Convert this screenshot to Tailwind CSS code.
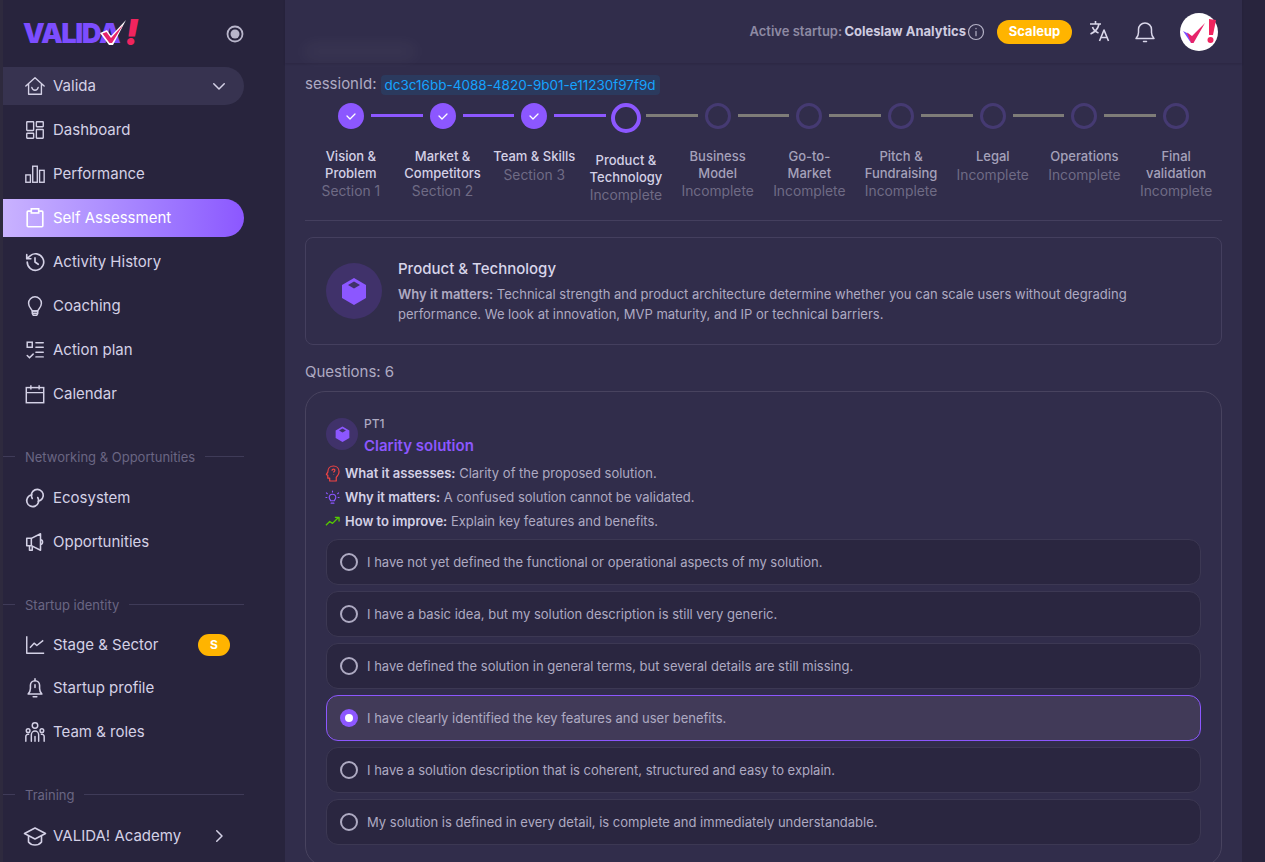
<!DOCTYPE html>
<html lang="en">
<head>
  <meta charset="UTF-8" />
  <title>VALIDA! - Self Assessment</title>
  <script src="https://cdn.jsdelivr.net/npm/@tailwindcss/browser@4"></script>
</head>
<body class="bg-[#28243d] font-['Inter',sans-serif] text-[#d4d1e6]">
<div class="flex h-screen overflow-hidden">

  <!-- Sidebar -->
  <aside class="w-[285px] shrink-0 bg-[#28243d] text-[15px] border-l-[3px] border-[#2e2a3e] box-border">
    <div class="h-[67px] flex items-center pl-5 pr-[41px] justify-between">
      <div class="relative w-[116px] h-[30px] -mt-[1px]">
        <span class="text-[27.500px] leading-[30px] font-black tracking-[-1.500px] text-[#7c4dff]">VALIDA</span>
        <span class="absolute left-[102px] -top-[6px] text-[36px] leading-[40px] font-black italic text-[#f0245e]">!</span>
        <svg class="absolute left-[76px] top-[1px]" width="28" height="27" viewBox="0 0 28 27" fill="none">
          <path d="M1 14 L8 11 L12 17 L27 1 L14 26 L10 26Z" fill="#fff"/>
          <path d="M3.500 14.500 L7.500 13 L12 19 L24 6 L13 24 L10.500 24Z" fill="#e6246a"/>
        </svg>
      </div>
      <svg width="18" height="18" viewBox="0 0 18 18" fill="none"><circle cx="9" cy="9" r="7.500" stroke="#b9b6cb" stroke-width="1.800"/><circle cx="9" cy="9" r="4.500" fill="#b9b6cb"/></svg>
    </div>

    <nav class="w-[241px]">
      <a class="flex items-center h-[38px] pl-[21px] pr-4 gap-[7px] rounded-r-full bg-[#373350]">
        <svg class="w-[22px] h-[22px] shrink-0" viewBox="0 0 24 24" fill="none" stroke="#d4d1e6" stroke-width="1.500" stroke-linejoin="round" stroke-linecap="round"><path d="M2 12 12 3l10 9M5 10v11h14V10"/><path d="M8.500 13.500c.6 2.300 2 3.200 3.500 3.200s2.900-.9 3.500-3.200"/></svg>
        <span class="flex-1">Valida</span>
        <svg class="w-[18px] h-[18px]" viewBox="0 0 24 24" fill="none" stroke="#d4d1e6" stroke-width="2" stroke-linecap="round" stroke-linejoin="round"><path d="m5 9 7 7 7-7"/></svg>
      </a>

      <a class="flex items-center h-[38px] mt-[6px] pl-[21px] gap-[7px]">
        <svg class="w-[22px] h-[22px] shrink-0" viewBox="0 0 24 24" fill="none" stroke="#d4d1e6" stroke-width="1.500"><rect x="3" y="3" width="7.500" height="9.500" rx=".5"/><rect x="13.500" y="3" width="7.500" height="5.500" rx=".5"/><rect x="3" y="15.500" width="7.500" height="5.500" rx=".5"/><rect x="13.500" y="11.500" width="7.500" height="9.500" rx=".5"/></svg>
        <span>Dashboard</span>
      </a>
      <a class="flex items-center h-[38px] mt-[6px] pl-[21px] gap-[7px]">
        <svg class="w-[22px] h-[22px] shrink-0" viewBox="0 0 24 24" fill="none" stroke="#d4d1e6" stroke-width="1.500"><rect x="2" y="13" width="5" height="8"/><rect x="9.500" y="3.500" width="5" height="17.500"/><rect x="17" y="8" width="5" height="13"/></svg>
        <span>Performance</span>
      </a>
      <a class="flex items-center h-[38px] mt-[6px] pl-[21px] gap-[7px] rounded-r-full bg-gradient-to-r from-[#c9b2ff] to-[#8c57ff] text-white">
        <svg class="w-[22px] h-[22px] shrink-0" viewBox="0 0 24 24" fill="none" stroke="#fff" stroke-width="1.800"><rect x="3.500" y="4.500" width="17" height="17" rx="1"/><rect x="8" y="2" width="8" height="4.500" fill="#b195ff"/></svg>
        <span>Self Assessment</span>
      </a>
      <a class="flex items-center h-[38px] mt-[6px] pl-[21px] gap-[7px]">
        <svg class="w-[22px] h-[22px] shrink-0" viewBox="0 0 24 24" fill="none" stroke="#d4d1e6" stroke-width="1.800" stroke-linecap="round" stroke-linejoin="round"><path d="M3.500 12a9 9 0 1 0 2.800-6.500L3 8.500M3 4v4.500h4.500M12 7.500V12l3.500 2.500"/></svg>
        <span>Activity History</span>
      </a>
      <a class="flex items-center h-[38px] mt-[6px] pl-[21px] gap-[7px]">
        <svg class="w-[22px] h-[22px] shrink-0" viewBox="0 0 24 24" fill="none" stroke="#d4d1e6" stroke-width="1.600" stroke-linejoin="round"><path d="M9 17.500c0-2-4-3.500-4-8.500a7 7 0 0 1 14 0c0 5-4 6.500-4 8.500Z"/><path d="M9 17.500h6v2.500l-1 2h-4l-1-2ZM9 20h6"/></svg>
        <span>Coaching</span>
      </a>
      <a class="flex items-center h-[38px] mt-[6px] pl-[21px] gap-[7px]">
        <svg class="w-[22px] h-[22px] shrink-0" viewBox="0 0 24 24" fill="none" stroke="#d4d1e6" stroke-width="1.600"><rect x="3.500" y="3.500" width="5.500" height="5.500"/><path d="M13 4h8M13 9h8M13 19.500h8M13 14.500h8M3.500 18l2.500 2.500 4-4" stroke-linecap="round"/></svg>
        <span>Action plan</span>
      </a>
      <a class="flex items-center h-[38px] mt-[6px] pl-[21px] gap-[7px]">
        <svg class="w-[22px] h-[22px] shrink-0" viewBox="0 0 24 24" fill="none" stroke="#d4d1e6" stroke-width="1.600"><rect x="2.500" y="5" width="19" height="16.500"/><path d="M2.500 10.500h19M7.500 2.500V7M16.500 2.500V7"/></svg>
        <span>Calendar</span>
      </a>

      <div class="flex items-center h-4 mt-[37px] text-[13px] text-[#6a6683] gap-[10px]">
        <span class="w-3 h-px -mt-[4px] bg-[#3f3b58]"></span>
        <span>Networking &amp; Opportunities</span>
        <span class="flex-1 h-px -mt-[4px] bg-[#3f3b58]"></span>
      </div>

      <a class="flex items-center h-[38px] mt-[13px] pl-[21px] gap-[7px]">
        <svg class="w-[22px] h-[22px] shrink-0" viewBox="0 0 24 24" fill="none" stroke="#d4d1e6" stroke-width="1.800" stroke-linecap="round"><path d="M9 12.500A6.500 6.500 0 1 1 15.500 15.500"/><path d="M15 11.500A6.500 6.500 0 1 1 8.500 8.500"/></svg>
        <span>Ecosystem</span>
      </a>
      <a class="flex items-center h-[38px] mt-[6px] pl-[21px] gap-[7px]">
        <svg class="w-[22px] h-[22px] shrink-0" viewBox="0 0 24 24" fill="none" stroke="#d4d1e6" stroke-width="1.700" stroke-linejoin="round"><path d="M3 8h5l10-5v18L8 16H3Z"/><path d="M8 8v8M6 16v5h3v-4.500M18 9.500c3 0 3 5 0 5"/></svg>
        <span>Opportunities</span>
      </a>

      <div class="flex items-center h-4 mt-[37px] text-[13px] text-[#6a6683] gap-[10px]">
        <span class="w-3 h-px -mt-[4px] bg-[#3f3b58]"></span>
        <span>Startup identity</span>
        <span class="flex-1 h-px -mt-[4px] bg-[#3f3b58]"></span>
      </div>

      <a class="flex items-center h-[38px] mt-[12px] pl-[21px] gap-[7px]">
        <svg class="w-[22px] h-[22px] shrink-0" viewBox="0 0 24 24" fill="none" stroke="#d4d1e6" stroke-width="1.600" stroke-linejoin="round"><path d="M3 2.500V21h19M6.500 15l4.500-5 3 2.500 7-5.500"/></svg>
        <span class="flex-1">Stage &amp; Sector</span>
        <span class="w-8 h-[22px] mr-[14px] rounded-full bg-[#ffb400] text-white text-[12px] font-bold flex items-center justify-center">S</span>
      </a>
      <a class="flex items-center h-[38px] mt-[5px] pl-[21px] gap-[7px]">
        <svg class="w-[22px] h-[22px] shrink-0" viewBox="0 0 24 24" fill="none" stroke="#d4d1e6" stroke-width="1.700" stroke-linejoin="round" stroke-linecap="round"><path d="M4.500 18.500c1.500-1.500 2.500-3 2.500-6V9a5 5 0 0 1 10 0v3.500c0 3 1 4.500 2.500 6Z"/><path d="M12 2v2M12 8.500v3M10 21.500h4"/></svg>
        <span>Startup profile</span>
      </a>
      <a class="flex items-center h-[38px] mt-[6px] pl-[21px] gap-[7px]">
        <svg class="w-[22px] h-[22px] shrink-0" viewBox="0 0 24 24" fill="none" stroke="#d4d1e6" stroke-width="1.600" stroke-linecap="round"><circle cx="12" cy="5" r="3"/><circle cx="4.500" cy="10.500" r="2"/><circle cx="19.500" cy="10.500" r="2"/><path d="M8 22v-7a4 4 0 0 1 8 0v7M12 17v5M2 22v-5a2.500 2.500 0 0 1 3-2.500M22 22v-5a2.500 2.500 0 0 0-3-2.500"/></svg>
        <span>Team &amp; roles</span>
      </a>

      <div class="flex items-center h-4 mt-[37px] text-[13px] text-[#6a6683] gap-[10px]">
        <span class="w-3 h-px -mt-[4px] bg-[#3f3b58]"></span>
        <span>Training</span>
        <span class="flex-1 h-px -mt-[4px] bg-[#3f3b58]"></span>
      </div>

      <a class="flex items-center h-[38px] mt-[13px] pl-[20px] pr-4 gap-[6px]">
        <svg class="w-[24px] h-[24px] shrink-0" viewBox="0 0 24 24" fill="none" stroke="#d4d1e6" stroke-width="1.600" stroke-linejoin="round"><path d="M1.500 9.500 12 4l10.500 5.500L12 15Z"/><path d="M5.500 12v6c1.500 2 4 3 6.500 3s5-1 6.500-3v-6"/></svg>
        <span class="flex-1">VALIDA! Academy</span>
        <svg class="w-[18px] h-[18px]" viewBox="0 0 24 24" fill="none" stroke="#d4d1e6" stroke-width="2" stroke-linecap="round" stroke-linejoin="round"><path d="m9 5 7 7-7 7"/></svg>
      </a>
    </nav>
  </aside>

  <!-- Main -->
  <main class="w-[957px] shrink-0 bg-[#312d4b] relative">
    <header class="h-[63px] flex items-center justify-end pr-6 gap-[23px] shadow-[0_1px_2px_rgba(30,26,50,0.3)] relative">
      <div class="absolute left-[20px] top-[45px] w-[110px] h-[13px] rounded bg-white/5 blur-sm"></div>
      <div class="flex items-center gap-[1px] text-[13px] font-semibold text-[#8e8aa3] -mr-[14px]">
        <span>Active startup: <b class="font-bold text-[#cfcce0] -ml-[1px]">Coleslaw Analytics</b></span>
        <svg class="w-[18px] h-[18px]" viewBox="0 0 24 24" fill="none" stroke="#b5b2c7" stroke-width="1.600" stroke-linecap="round"><circle cx="12" cy="12" r="10"/><path d="M12 11v6M12 7v.5"/></svg>
      </div>
      <span class="w-[75px] h-6 ml-[3px] rounded-full bg-[#ffb400] text-white text-[13px] font-bold flex items-center justify-center">Scaleup</span>
      <svg class="w-6 h-6 -ml-[7px] mr-[-2px] -mt-[2px]" viewBox="0 0 24 24" fill="none" stroke="#dad7ea" stroke-width="1.600" stroke-linejoin="round"><path d="M2 5h11M7.500 2v3M11 5c-1 5-4 8-8.500 10M4.500 8c1 3 3.500 5 6 6"/><path d="M11.500 22l4.500-11 4.500 11M13 18.500h6"/></svg>
      <svg class="w-6 h-6" viewBox="0 0 24 24" fill="none" stroke="#dad7ea" stroke-width="1.500" stroke-linecap="round" stroke-linejoin="round"><path d="M3 18.500h18c-1.500-1.500-2.500-2.500-2.500-6V9.500a6.500 6.500 0 0 0-13 0v3c0 3.500-1 4.500-2.500 6Z"/><path d="M10.500 21.500h3"/></svg>
      <div class="w-[38px] h-[38px] rounded-full bg-white">
        <svg width="38" height="38" viewBox="0 0 38 38" fill="none">
          <path d="M3 18l6 3 2 9Z" fill="#7c4dff"/>
          <path d="M7 19.500l5 3.500L25 10 13.500 30h-2.500Z" fill="#e6246a"/>
          <path d="M29 6l7 1-3 15h-4Z" fill="#f0245e"/><circle cx="30.500" cy="27" r="3" fill="#f0245e"/>
        </svg>
      </div>
    </header>

    <div class="px-5">
      <div class="flex items-center gap-1 h-[21px] mt-[11px] text-[15px] text-[#aeaac2]">
        <span>sessionId:</span>
        <code class="font-['Inter',sans-serif] px-1 h-5 leading-5 rounded bg-[#2b3a5e] text-[#16a3ff] text-[13.500px]">dc3c16bb-4088-4820-9b01-e11230f97f9d</code>
      </div>

      <!-- Stepper -->
      <div class="grid grid-cols-10 mt-2 h-[118px] border-b border-[#443f5e] text-[13px] leading-[16.700px] text-center">
        <div>
          <div class="flex items-start"><span class="flex-1"></span><span class="w-10 flex justify-center"><span class="w-[26px] h-[26px] rounded-full bg-[#8c57ff] flex items-center justify-center"><svg class="w-3 h-3" viewBox="0 0 12 12" fill="none" stroke="#fff" stroke-width="1.300" stroke-linecap="round" stroke-linejoin="round"><path d="m2 6 3 3 5-5"/></svg></span></span><span class="flex-1 h-[3px] mt-[11px] bg-[#8c57ff]"></span></div>
          <p class="mt-[19px] font-medium text-[#d4d1e6]">Vision &amp; Problem</p><p class="text-[13.800px] leading-[18px] text-[#6f6b85] mt-[1px]">Section 1</p>
        </div>
        <div>
          <div class="flex items-start"><span class="flex-1 h-[3px] mt-[11px] bg-[#8c57ff]"></span><span class="w-10 flex justify-center"><span class="w-[26px] h-[26px] rounded-full bg-[#8c57ff] flex items-center justify-center"><svg class="w-3 h-3" viewBox="0 0 12 12" fill="none" stroke="#fff" stroke-width="1.300" stroke-linecap="round" stroke-linejoin="round"><path d="m2 6 3 3 5-5"/></svg></span></span><span class="flex-1 h-[3px] mt-[11px] bg-[#8c57ff]"></span></div>
          <p class="mt-[19px] font-medium text-[#d4d1e6]">Market &amp; Competitors</p><p class="text-[13.800px] leading-[18px] text-[#6f6b85] mt-[1px]">Section 2</p>
        </div>
        <div>
          <div class="flex items-start"><span class="flex-1 h-[3px] mt-[11px] bg-[#8c57ff]"></span><span class="w-10 flex justify-center"><span class="w-[26px] h-[26px] rounded-full bg-[#8c57ff] flex items-center justify-center"><svg class="w-3 h-3" viewBox="0 0 12 12" fill="none" stroke="#fff" stroke-width="1.300" stroke-linecap="round" stroke-linejoin="round"><path d="m2 6 3 3 5-5"/></svg></span></span><span class="flex-1 h-[3px] mt-[11px] bg-[#8c57ff]"></span></div>
          <p class="mt-[19px] font-medium text-[#d4d1e6] whitespace-nowrap">Team &amp; Skills</p><p class="text-[13.800px] leading-[18px] text-[#6f6b85] mt-[1px]">Section 3</p>
        </div>
        <div>
          <div class="flex items-start"><span class="flex-1 h-[3px] mt-[11px] bg-[#8c57ff]"></span><span class="w-10 flex justify-center"><span class="w-[30px] h-[30px] rounded-full border-4 border-[#8c57ff]"></span></span><span class="flex-1 h-[3px] mt-[11px] bg-[#7e7c78]"></span></div>
          <p class="mt-[19px] font-medium text-[#d4d1e6]">Product &amp; Technology</p><p class="text-[13.800px] leading-[18px] text-[#6f6b85] mt-[1px]">Incomplete</p>
        </div>
        <div>
          <div class="flex items-start"><span class="flex-1 h-[3px] mt-[11px] bg-[#7e7c78]"></span><span class="w-10 flex justify-center"><span class="w-[26px] h-[26px] rounded-full border-[3px] border-[#453a72]"></span></span><span class="flex-1 h-[3px] mt-[11px] bg-[#7e7c78]"></span></div>
          <p class="mt-[19px] font-medium text-[#a5a1ba]">Business Model</p><p class="text-[13.800px] leading-[18px] text-[#6f6b85] mt-[1px]">Incomplete</p>
        </div>
        <div>
          <div class="flex items-start"><span class="flex-1 h-[3px] mt-[11px] bg-[#7e7c78]"></span><span class="w-10 flex justify-center"><span class="w-[26px] h-[26px] rounded-full border-[3px] border-[#453a72]"></span></span><span class="flex-1 h-[3px] mt-[11px] bg-[#7e7c78]"></span></div>
          <p class="mt-[19px] font-medium text-[#a5a1ba]">Go-to-<br />Market</p><p class="text-[13.800px] leading-[18px] text-[#6f6b85] mt-[1px]">Incomplete</p>
        </div>
        <div>
          <div class="flex items-start"><span class="flex-1 h-[3px] mt-[11px] bg-[#7e7c78]"></span><span class="w-10 flex justify-center"><span class="w-[26px] h-[26px] rounded-full border-[3px] border-[#453a72]"></span></span><span class="flex-1 h-[3px] mt-[11px] bg-[#7e7c78]"></span></div>
          <p class="mt-[19px] font-medium text-[#a5a1ba]">Pitch &amp; Fundraising</p><p class="text-[13.800px] leading-[18px] text-[#6f6b85] mt-[1px]">Incomplete</p>
        </div>
        <div>
          <div class="flex items-start"><span class="flex-1 h-[3px] mt-[11px] bg-[#7e7c78]"></span><span class="w-10 flex justify-center"><span class="w-[26px] h-[26px] rounded-full border-[3px] border-[#453a72]"></span></span><span class="flex-1 h-[3px] mt-[11px] bg-[#7e7c78]"></span></div>
          <p class="mt-[19px] font-medium text-[#a5a1ba]">Legal</p><p class="text-[13.800px] leading-[18px] text-[#6f6b85] mt-[1px]">Incomplete</p>
        </div>
        <div>
          <div class="flex items-start"><span class="flex-1 h-[3px] mt-[11px] bg-[#7e7c78]"></span><span class="w-10 flex justify-center"><span class="w-[26px] h-[26px] rounded-full border-[3px] border-[#453a72]"></span></span><span class="flex-1 h-[3px] mt-[11px] bg-[#7e7c78]"></span></div>
          <p class="mt-[19px] font-medium text-[#a5a1ba]">Operations</p><p class="text-[13.800px] leading-[18px] text-[#6f6b85] mt-[1px]">Incomplete</p>
        </div>
        <div>
          <div class="flex items-start"><span class="flex-1 h-[3px] mt-[11px] bg-[#7e7c78]"></span><span class="w-10 flex justify-center"><span class="w-[26px] h-[26px] rounded-full border-[3px] border-[#453a72]"></span></span><span class="flex-1"></span></div>
          <p class="mt-[19px] font-medium text-[#a5a1ba]">Final validation</p><p class="text-[13.800px] leading-[18px] text-[#6f6b85] mt-[1px]">Incomplete</p>
        </div>
      </div>

      <!-- Section info -->
      <section class="mt-4 h-[108px] rounded-lg border border-[#443f5e] flex items-center pl-5 gap-4">
        <div class="w-14 h-14 shrink-0 rounded-full bg-[#40326a] flex items-center justify-center">
          <svg width="26" height="28" viewBox="0 0 26 28"><path d="M13 1 25 8v13l-12 7-12-7V8Z" fill="#8c57ff"/><path d="M13 4.500 7 8l6 3.500L19 8Z" fill="#40326a"/></svg>
        </div>
        <div class="pr-10">
          <h3 class="text-[15px] leading-5 font-medium text-[#d8d5ea]">Product &amp; Technology</h3>
          <p class="mt-[5px] text-[13px] leading-5 text-[#aeaac2]"><b class="font-semibold">Why it matters:</b> Technical strength and product architecture determine whether you can scale users without degrading performance. We look at innovation, MVP maturity, and IP or technical barriers.</p>
        </div>
      </section>

      <p class="mt-[17px] h-5 text-[15px] leading-5 text-[#aeaac2]">Questions: 6</p>

      <!-- Question card -->
      <section class="mt-[9px] rounded-[20px] border border-[#48435f] px-5 pt-[26px] pb-5">
        <div class="flex gap-[6px]">
          <div class="w-8 h-8 shrink-0 rounded-full bg-[#40326a] flex items-center justify-center">
            <svg width="15" height="16" viewBox="0 0 26 28"><path d="M13 1 25 8v13l-12 7-12-7V8Z" fill="#8c57ff"/><path d="M13 4.500 7 8l6 3.500L19 8Z" fill="#40326a"/></svg>
          </div>
          <div class="-mt-[1px]">
            <p class="text-[12px] leading-[14px] font-medium text-[#aeaac2]">PT1</p>
            <p class="mt-[5px] text-[15px] leading-5 font-semibold text-[#8c57ff]">Clarity solution</p>
          </div>
        </div>

        <div class="mt-[5px] text-[13px] leading-6 text-[#aeaac2]">
          <p class="flex items-center gap-1">
            <svg class="w-[15px] h-[17px] -ml-[1px]" viewBox="0 0 16 18" fill="none" stroke="#ef4444" stroke-width="1.300" stroke-linejoin="round"><path d="M5 17v-3H3v-3L1.500 10 3 7.500C3 3.500 5.500 1 9 1s6 2.500 6 6-2 4.500-3 6v4Z"/><path d="M7.500 6c0-2.300 3.300-2 3-.2-.1 1-1.300 1.200-1.300 2.200M9.200 9.500v.5"/></svg>
            <span class="ml-[1px]"><b class="font-semibold text-[#d4d1e6]">What it assesses:</b> Clarity of the proposed solution.</span>
          </p>
          <p class="flex items-center gap-1">
            <svg class="w-[15px] h-[15px] -ml-[1px]" viewBox="0 0 16 16" fill="none" stroke="#8c57ff" stroke-width="1.200" stroke-linecap="round" stroke-linejoin="round"><path d="M6 11.500c0-1-1.500-1.700-1.500-3.500a3.500 3.500 0 0 1 7 0c0 1.800-1.500 2.500-1.500 3.500ZM6.500 14h3M8 1v1M1.500 3l1 1M14.500 3l-1 1M1 8h1M14 8h1"/></svg>
            <span class="ml-[1px]"><b class="font-semibold text-[#d4d1e6]">Why it matters:</b> A confused solution cannot be validated.</span>
          </p>
          <p class="flex items-center gap-1">
            <svg class="w-[15px] h-[15px] -ml-[1px]" viewBox="0 0 16 16" fill="none" stroke="#56ca00" stroke-width="1.400" stroke-linejoin="round"><path d="M1 12l4-4 3 2 6-6M10.500 3.500H15V8"/></svg>
            <span class="ml-[1px]"><b class="font-semibold text-[#d4d1e6]">How to improve:</b> Explain key features and benefits.</span>
          </p>
        </div>

        <div class="mt-[6px] flex flex-col gap-[6px] text-[13px] text-[#aeaac2]">
          <label class="h-[46px] rounded-xl border border-[#3c3853] bg-[#2a2640] flex items-center gap-[9px] pl-[13px]">
            <span class="w-[18px] h-[18px] rounded-full border-2 border-[#aeaac2]"></span>
            <span class="pt-[2px]">I have not yet defined the functional or operational aspects of my solution.</span>
          </label>
          <label class="h-[46px] rounded-xl border border-[#3c3853] bg-[#2a2640] flex items-center gap-[9px] pl-[13px]">
            <span class="w-[18px] h-[18px] rounded-full border-2 border-[#aeaac2]"></span>
            <span class="pt-[2px]">I have a basic idea, but my solution description is still very generic.</span>
          </label>
          <label class="h-[46px] rounded-xl border border-[#3c3853] bg-[#2a2640] flex items-center gap-[9px] pl-[13px]">
            <span class="w-[18px] h-[18px] rounded-full border-2 border-[#aeaac2]"></span>
            <span class="pt-[2px]">I have defined the solution in general terms, but several details are still missing.</span>
          </label>
          <label class="h-[46px] rounded-xl border border-[#8c57ff] bg-[#413a58] flex items-center gap-[9px] pl-[13px]">
            <span class="w-[18px] h-[18px] rounded-full bg-[#8c57ff] flex items-center justify-center"><span class="w-2 h-2 rounded-full bg-white"></span></span>
            <span class="pt-[2px]">I have clearly identified the key features and user benefits.</span>
          </label>
          <label class="h-[46px] rounded-xl border border-[#3c3853] bg-[#2a2640] flex items-center gap-[9px] pl-[13px]">
            <span class="w-[18px] h-[18px] rounded-full border-2 border-[#aeaac2]"></span>
            <span class="pt-[2px]">I have a solution description that is coherent, structured and easy to explain.</span>
          </label>
          <label class="h-[46px] rounded-xl border border-[#3c3853] bg-[#2a2640] flex items-center gap-[9px] pl-[13px]">
            <span class="w-[18px] h-[18px] rounded-full border-2 border-[#aeaac2]"></span>
            <span class="pt-[2px]">My solution is defined in every detail, is complete and immediately understandable.</span>
          </label>
        </div>
      </section>
    </div>
  </main>

  <div class="flex-1 bg-[#28243d]"></div>
</div>
</body>
</html>
